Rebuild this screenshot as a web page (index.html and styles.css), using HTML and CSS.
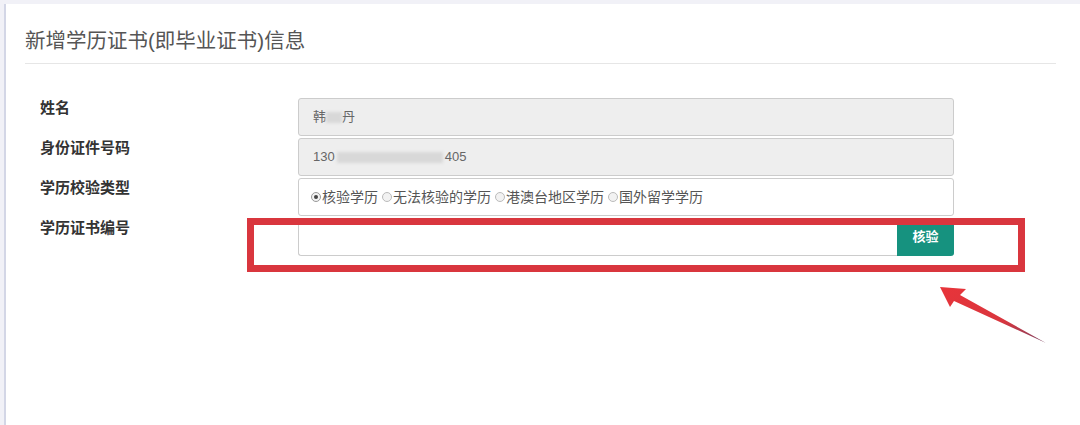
FILE: index.html
```html
<!DOCTYPE html>
<html lang="zh-CN">
<head>
    <meta charset="UTF-8">
    <meta name="viewport" content="width=device-width, initial-scale=1.0">
    <title>新增学历证书信息</title>
    <link rel="stylesheet" href="styles.css">
</head>
<body>

<div class="panel">
    <h3 class="panel-title">新增学历证书(即毕业证书)信息</h3>
    <div class="divider"></div>

    <form class="cert-form">
        <div class="form-row">
            <label class="form-label">姓名</label>
            <div class="form-field readonly">韩<span class="masked masked-name"></span>丹</div>
        </div>
        <div class="form-row">
            <label class="form-label">身份证件号码</label>
            <div class="form-field readonly">130<span class="masked masked-id"></span>405</div>
        </div>
        <div class="form-row">
            <label class="form-label">学历校验类型</label>
            <div class="form-field radios">
                <span class="radio checked"></span>核验学历
                <span class="radio"></span>无法核验的学历
                <span class="radio"></span>港澳台地区学历
                <span class="radio"></span>国外留学学历
            </div>
        </div>
        <div class="form-row">
            <label class="form-label">学历证书编号</label>
            <div class="input-group">
                <input type="text" class="form-input">
                <button type="button" class="check-button">核验</button>
            </div>
        </div>
    </form>
</div>

<!-- annotation drawn over the screenshot -->
<div class="highlight-box"></div>
<svg class="arrow" width="120" height="70" viewBox="0 0 120 70">
    <defs>
        <linearGradient id="arrowFill" x1="0" y1="0" x2="1" y2="1">
            <stop offset="0" stop-color="#e8343a"/>
            <stop offset="0.6" stop-color="#d9363e"/>
            <stop offset="1" stop-color="#7a4060"/>
        </linearGradient>
    </defs>
    <polygon points="2,2 28,4 22,10 108,58 16,16 12,22" fill="url(#arrowFill)"/>
</svg>

</body>
</html>
```

FILE: styles.css
```css
body {
    margin: 0;
    background: #f1f1f7;
    font-family: "Liberation Sans", "Noto Sans CJK SC", sans-serif;
    height: 425px;
    overflow: hidden;
}
.panel {
    margin: 4px 0 0 4px;
    height: 421px;
    background: #fff;
    border-left: 2px solid #d3d6e6;
    padding: 0 24px 0 19px;
    box-sizing: border-box;
}
.panel-title {
    margin: 0;
    padding-top: 23px;
    font-size: 20.5px;
    line-height: 28px;
    font-weight: normal;
    color: #555;
}
.divider {
    margin-top: 8px;
    height: 1px;
    background: #e6e6e6;
}
.cert-form {
    padding: 34px 0 0 15px;
}
.form-row {
    display: flex;
    height: 40px;
}
.form-label {
    width: 258px;
    font-size: 15px;
    line-height: 20px;
    font-weight: bold;
    color: #333;
}
.form-field {
    width: 656px;
    height: 38px;
    box-sizing: border-box;
    border: 1px solid #ccc;
    border-radius: 3px;
    padding-left: 14px;
    font-size: 13px;
    line-height: 36px;
    color: #666;
    display: flex;
    align-items: center;
}
.form-field.readonly {
    background: #eee;
}
.masked {
    display: inline-block;
    height: 11px;
    background: #d8d8d8;
    filter: blur(1.5px);
}
.masked-name {
    width: 16px;
}
.masked-id {
    width: 106px;
    margin: 0 2px;
}
.radios {
    background: #fff;
    padding-left: 12px;
    font-size: 14px;
    color: #555;
}
.radio {
    display: inline-block;
    width: 10px;
    height: 10px;
    border: 1px solid #bbb;
    border-radius: 50%;
    background: #f2f2f2;
    margin: 0 1px 0 4px;
    box-sizing: border-box;
    position: relative;
}
.radio:first-child {
    margin-left: 0;
}
.radio.checked {
    border-color: #999;
}
.radio.checked::after {
    content: "";
    position: absolute;
    left: 2px;
    top: 2px;
    width: 4px;
    height: 4px;
    border-radius: 50%;
    background: #444;
}
.input-group {
    display: flex;
    width: 656px;
    height: 38px;
}
.form-input {
    flex: 1;
    height: 38px;
    box-sizing: border-box;
    border: 1px solid #ccc;
    border-right: none;
    border-radius: 3px 0 0 3px;
    outline: none;
}
.check-button {
    width: 57px;
    height: 38px;
    border: none;
    border-radius: 0 3px 3px 0;
    background: #16927f;
    color: #fff;
    font-family: "Noto Sans CJK SC", sans-serif;
    font-size: 13px;
    font-weight: bold;
    padding: 0 0 4px;
}
.highlight-box {
    position: absolute;
    left: 247px;
    top: 218px;
    width: 778px;
    height: 54px;
    box-sizing: border-box;
    border: 7px solid #d9363e;
}
.arrow {
    position: absolute;
    left: 938px;
    top: 285px;
}
```
